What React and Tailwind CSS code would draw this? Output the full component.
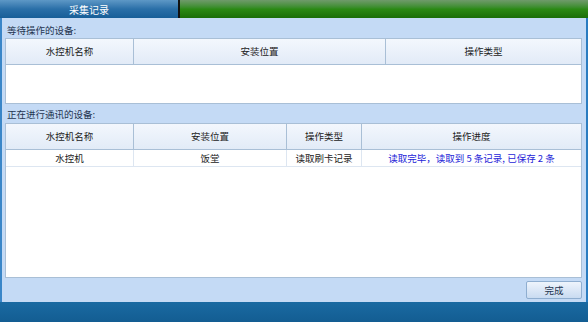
import React from 'react';

const font = { fontFamily: '"Noto Sans CJK SC", "DejaVu Sans", sans-serif' };

const App = () => {
  return (
    <div className="w-[588px] h-[322px] flex flex-col bg-[#c4daf5] text-[9.5px] text-[#222]" style={font}>
      {/* Top tab bar */}
      <div className="h-[18px] flex shrink-0">
        <div className="w-[178px] flex items-center justify-center text-[10px] text-white bg-gradient-to-b from-[#5d98c6] via-[#2a6fa8] to-[#175e98]">
          采集记录
        </div>
        <div className="w-[2px] bg-[#111]" />
        <div className="flex-1 bg-gradient-to-b from-[#6f9a6a] via-[#2b8a14] to-[#1a6e08]" />
      </div>

      {/* Body */}
      <div className="flex-1 flex border-l-2 border-l-[#3a86c8] border-r-2 border-r-[#2a7cc0]">
        <div className="flex-1 flex flex-col pl-[3px] pr-[4px]">
          <div className="h-[20px] flex items-center pl-[2px] pt-[4px] text-[#1f3550]">等待操作的设备:</div>
          <div className="h-[66px] bg-white border border-[#a9bfd6]">
            <div className="h-[26px] flex bg-gradient-to-b from-[#f3f7fd] to-[#e2ebf7] border-b border-[#a9bfd6]">
              <div className="w-[128px] flex items-center justify-center border-r border-[#a9bfd6]">水控机名称</div>
              <div className="w-[252px] flex items-center justify-center border-r border-[#a9bfd6]">安装位置</div>
              <div className="flex-1 flex items-center justify-center">操作类型</div>
            </div>
          </div>
          <div className="h-[18px] mt-[1px] flex items-center pt-[1px] pl-[2px] text-[#1f3550]">正在进行通讯的设备:</div>
          <div className="h-[155px] bg-white border border-[#a9bfd6]">
            <div className="h-[26px] flex bg-gradient-to-b from-[#f3f7fd] to-[#e2ebf7] border-b border-[#a9bfd6]">
              <div className="w-[128px] flex items-center justify-center border-r border-[#a9bfd6]">水控机名称</div>
              <div className="w-[153px] flex items-center justify-center border-r border-[#a9bfd6]">安装位置</div>
              <div className="w-[75px] flex items-center justify-center border-r border-[#a9bfd6]">操作类型</div>
              <div className="flex-1 flex items-center justify-center">操作进度</div>
            </div>
            <div className="h-[17px] flex border-b border-[#dde6f1]">
              <div className="w-[128px] flex items-center justify-center border-r border-[#dde6f1]">水控机</div>
              <div className="w-[153px] flex items-center justify-center border-r border-[#dde6f1]">饭堂</div>
              <div className="w-[75px] flex items-center justify-center border-r border-[#dde6f1]">读取刷卡记录</div>
              <div className="flex-1 flex items-center justify-center text-[#2424d8] whitespace-pre">读取完毕，读取到 5 条记录, 已保存 2 条</div>
            </div>
          </div>
          <div className="flex justify-end pt-[3px]">
            <button className="w-[56px] h-[18px] flex items-center justify-center rounded-[2px] border border-[#8faed0] bg-gradient-to-b from-[#eef4fc] to-[#c9dbf1] text-[#1f3550]">
              完成
            </button>
          </div>
        </div>
      </div>

      {/* Bottom bar */}
      <div className="h-[20px] shrink-0 bg-gradient-to-b from-[#1a6aa2] to-[#135d92]" />
    </div>
  );
};

export default App;
